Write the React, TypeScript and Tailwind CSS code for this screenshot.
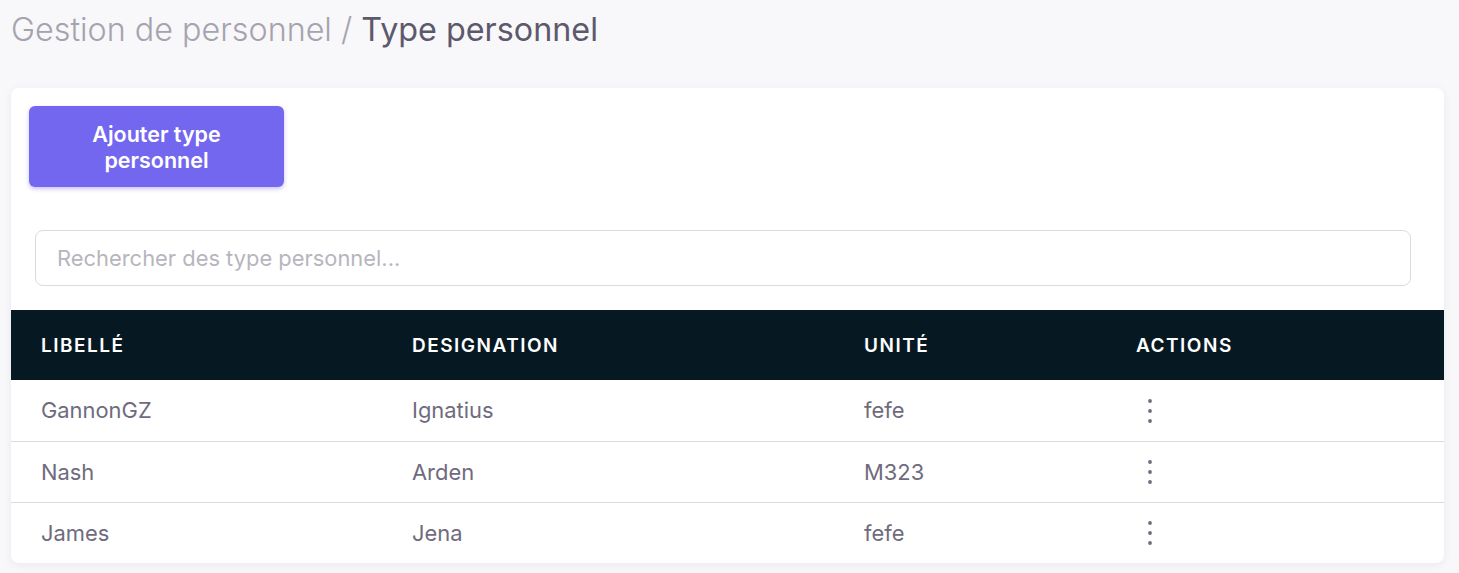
import { useState } from "react";

type Row = { libelle: string; designation: string; unite: string };

const rows: Row[] = [
  { libelle: "GannonGZ", designation: "Ignatius", unite: "fefe" },
  { libelle: "Nash", designation: "Arden", unite: "M323" },
  { libelle: "James", designation: "Jena", unite: "fefe" },
];

const cols = "grid grid-cols-[371px_452px_272px_1fr]";

function DotsIcon() {
  return (
    <svg width="6" height="26" viewBox="0 0 6 26" className="text-[#6f6b7d]">
      <circle cx="3" cy="3" r="1.9" fill="currentColor" />
      <circle cx="3" cy="13" r="1.9" fill="currentColor" />
      <circle cx="3" cy="23" r="1.9" fill="currentColor" />
    </svg>
  );
}

export default function App() {
  const [search, setSearch] = useState("");

  const filtered = rows.filter((r) =>
    (r.libelle + r.designation + r.unite).toLowerCase().includes(search.toLowerCase())
  );

  return (
    <main className="min-h-screen bg-[#f8f7fa] font-['Inter',sans-serif] pl-[11px] pr-[15px] pt-[9px] pb-[11px]">
      <h1 className="text-[32.3px] leading-[42px]">
        <span className="text-[#a5a3ae] font-light">Gestion de personnel / </span>
        <span className="text-[#5d596c] font-normal">Type personnel</span>
      </h1>

      <div className="mt-[37px] bg-white rounded-lg shadow-[0_2px_8px_rgba(75,70,92,0.08)] overflow-hidden">
        <div className="px-[18px] pt-[18px]">
          <button className="w-[255px] h-[81px] rounded-md bg-[#7367f0] text-white text-[21.5px] font-semibold leading-[26px] shadow-[0_2px_4px_rgba(115,103,240,0.4)]">
            Ajouter type
            <br />
            personnel
          </button>
        </div>

        <div className="pl-[24px] pr-[33px] pt-[43px] pb-[24px]">
          <input
            value={search}
            onChange={(e) => setSearch(e.target.value)}
            placeholder="Rechercher des type personnel..."
            className="w-full h-[56px] rounded-lg border border-[#dbdade] px-[21px] text-[21.9px] text-[#6f6b7d] placeholder:text-[#b7b5be] outline-none"
          />
        </div>

        <div className={`${cols} h-[70px] items-center pt-[2px] bg-[#061922] text-white text-[19px] font-semibold tracking-[1.5px] uppercase`}>
          <div className="pl-[30px]">Libellé</div>
          <div className="pl-[30px]">Designation</div>
          <div className="pl-[30px]">Unité</div>
          <div className="pl-[30px]">Actions</div>
        </div>

        {filtered.map((r, i) => (
          <div
            key={i}
            className={`${cols} h-[61px] items-center text-[21.9px] text-[#6f6b7d] ${i > 0 ? "border-t border-[#dbdade]" : ""}`}
          >
            <div className="pl-[30px]">{r.libelle}</div>
            <div className="pl-[30px]">{r.designation}</div>
            <div className="pl-[30px]">{r.unite}</div>
            <div className="pl-[41px] flex items-center">
              <DotsIcon />
            </div>
          </div>
        ))}
      </div>
    </main>
  );
}
